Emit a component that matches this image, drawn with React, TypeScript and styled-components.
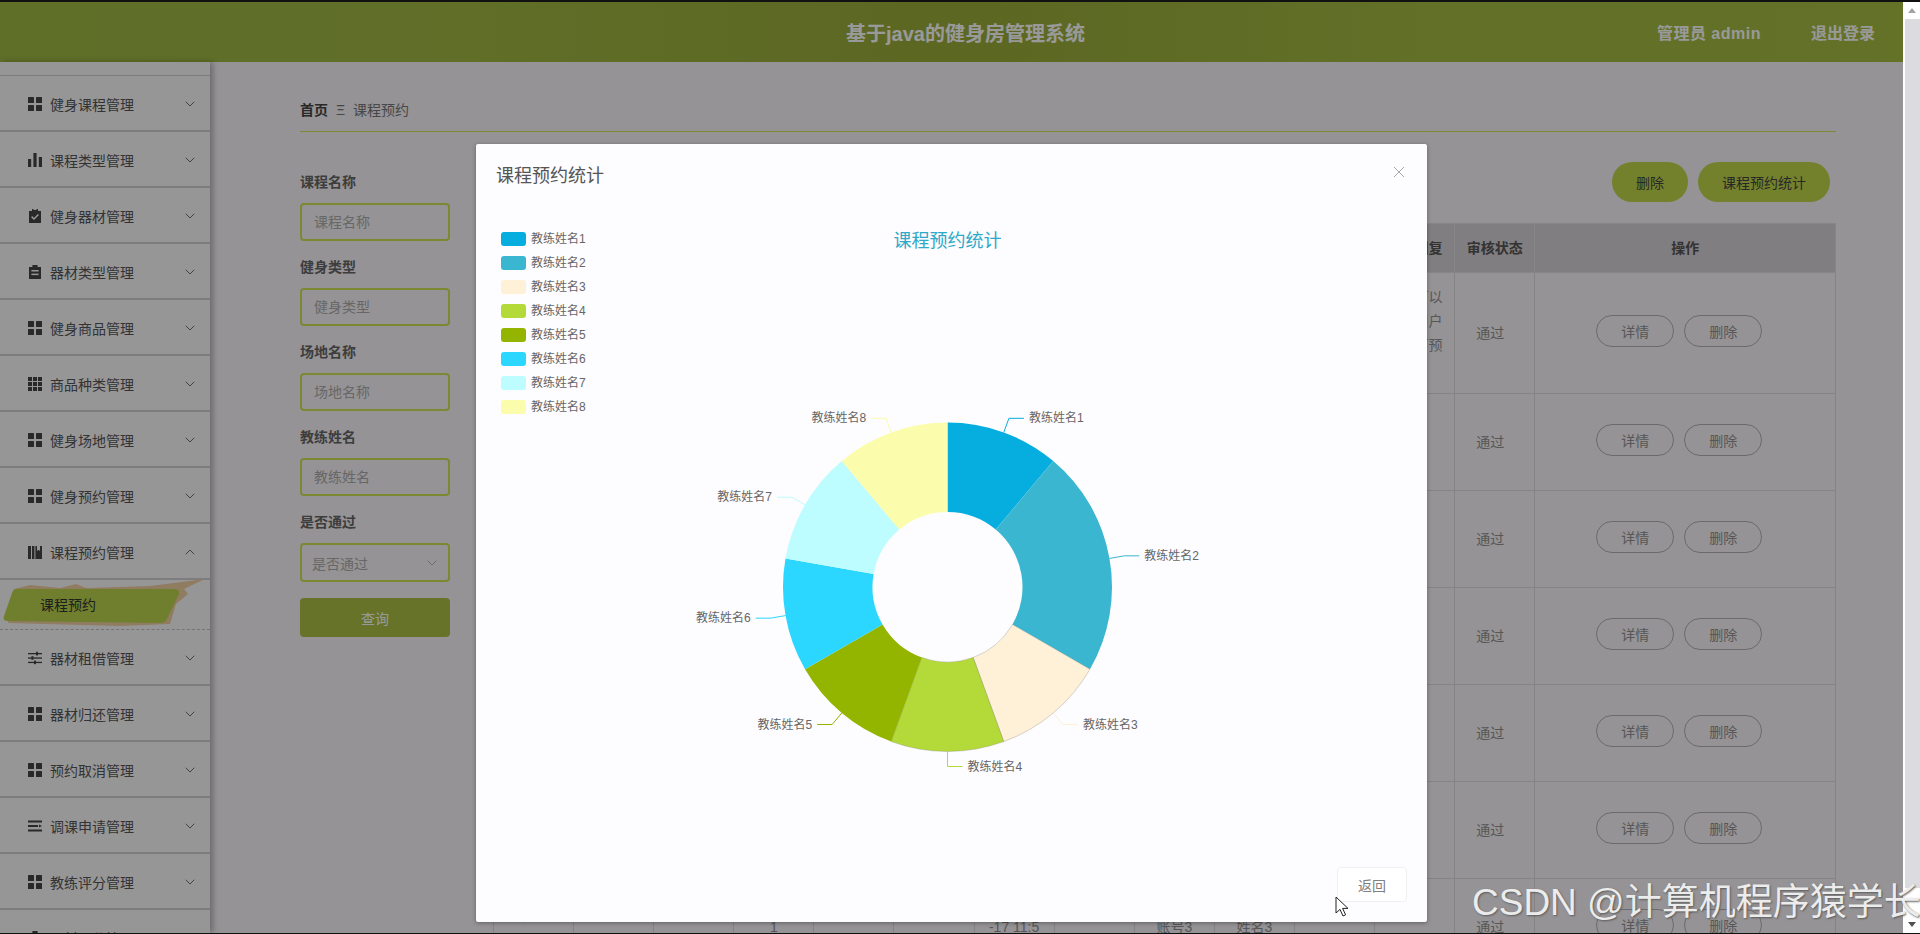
import { ReactNode } from 'react'
import styled, { createGlobalStyle } from 'styled-components'
import { LuChevronDown, LuChevronUp } from 'react-icons/lu'

const FONT = '"Liberation Sans", "Noto Sans CJK SC", sans-serif'

const GlobalStyle = createGlobalStyle`
  html, body { margin: 0; padding: 0; height: 100%; overflow: hidden; background: #000; }
  * { box-sizing: border-box; }
  body { font-family: ${FONT}; font-size: 14px; }
`

const Root = styled.div`
  position: relative;
  width: 1920px;
  height: 934px;
  padding: 2px 0 1px;
  overflow: hidden;
  display: flex;
  background: #111;
`

const Page = styled.div`
  position: relative;
  flex: 0 0 1903px;
  height: 100%;
  overflow: hidden;
  display: flex;
  flex-direction: column;
  background: #f8f5f8;
`

const Header = styled.header`
  flex: 0 0 60px;
  position: relative;
  display: flex;
  align-items: center;
  justify-content: flex-end;
  padding: 0 28px 0 0;
  gap: 50px;
  background: linear-gradient(90deg, #9eb943 0%, #a0b843 25%, #99ac39 50%, #a3bb43 75%, #a7be44 100%);
  color: #fff;
  font-size: 16px;
  font-weight: 700;
`

const HeaderTitle = styled.div`
  position: absolute;
  left: 846px;
  top: 18px;
  font-size: 20px;
  line-height: 28px;
  font-weight: 700;
  color: #fff;
`

const AdminName = styled.span`
  letter-spacing: 0.5px;
`

const Body = styled.div`
  flex: 1;
  min-height: 0;
  display: flex;
`

const Sidebar = styled.nav`
  flex: 0 0 210px;
  padding-top: 13px;
  background: #fcfafc;
  box-shadow: 3px 0 6px rgba(0, 0, 0, 0.28);
  position: relative;
  z-index: 1;
`

const NavItem = styled.div<{ $first?: boolean }>`
  height: ${(p) => (p.$first ? '57px' : '56px')};
  padding: 2px 12px 0 28px;
  display: flex;
  align-items: center;
  border-bottom: 2px solid #d3d1d3;
  border-top: ${(p) => (p.$first ? '1px solid #d3d1d3' : '0')};
  color: #555;
  font-size: 14px;

  > svg:first-child {
    flex: 0 0 14px;
    width: 14px;
    height: 14px;
    margin-right: 8px;
    color: #454545;
  }
  span { flex: 1; }
  > svg:last-child { width: 16px; height: 16px; color: #666; stroke-width: 1.4; }
`

const SubItem = styled.div`
  position: relative;
  height: 50px;
  border-bottom: 1px dashed #c4c2c4;
  display: flex;
  align-items: center;
  padding: 0 0 1px 40px;
  font-size: 14px;
  color: #333;

  span { position: relative; }
`

const Brush = styled.svg`
  position: absolute;
  left: 0;
  top: 0;
  width: 210px;
  height: 50px;
  overflow: visible;
`

const Main = styled.main`
  flex: 1;
  min-width: 0;
  padding: 0 67px 0 90px;
  overflow: hidden;
`

const Breadcrumb = styled.div`
  height: 70px;
  padding-top: 38px;
  border-bottom: 1px solid #d0e455;
  display: flex;
  gap: 8px;
  line-height: 20px;
  color: #777;
  font-size: 14px;

  b { color: #444; }
`

const Content = styled.div`
  display: flex;
  gap: 43px;
  align-items: flex-start;
`

const SearchForm = styled.form`
  flex: 0 0 150px;
  padding-top: 40px;
`

const FieldLabel = styled.div`
  font-size: 14px;
  line-height: 20px;
  font-weight: 700;
  color: #666;
  margin-bottom: 11px;
`

const FieldInput = styled.input`
  display: block;
  width: 150px;
  height: 38px;
  margin-bottom: 16px;
  padding: 0 12px;
  border: 2px solid #cde455;
  border-radius: 4px;
  background: transparent;
  font: 14px ${FONT};
  outline: none;

  &::placeholder { color: #acacac; opacity: 1; }
`

const FieldSelect = styled.div`
  width: 150px;
  height: 39px;
  margin-bottom: 16px;
  padding: 0 8px 0 10px;
  border: 2px solid #cde455;
  border-radius: 4px;
  display: flex;
  align-items: center;
  justify-content: space-between;
  color: #acacac;

  svg { width: 16px; height: 16px; stroke-width: 1.3; }
`

const QueryButton = styled.button`
  display: block;
  width: 150px;
  height: 39px;
  border: 0;
  border-radius: 4px;
  background: #aac044;
  color: #fff;
  font: 14px ${FONT};
`

const TablePanel = styled.div`
  flex: 1;
  min-width: 0;
`

const Toolbar = styled.div`
  height: 91px;
  padding: 30px 6px 0 0;
  display: flex;
  justify-content: flex-end;
  gap: 10px;
`

const PillButton = styled.button<{ $w: number }>`
  width: ${(p) => p.$w}px;
  height: 40px;
  border: 0;
  border-radius: 20px;
  background: #c0d84b;
  color: #444;
  font: 14px ${FONT};
`

const Table = styled.table`
  width: 1342px;
  table-layout: fixed;
  border-collapse: collapse;
  color: #929292;
  font-size: 14px;
  line-height: 24px;
  text-align: center;

  th {
    height: 49px;
    padding: 0 6px;
    background: #d5d2d5;
    border: 1px solid #e2e0e2;
    color: #555;
    font-weight: 700;
  }
  td {
    padding: 12px 11px;
    border: 1px solid #dedcde;
    word-break: break-all;
    white-space: pre-line;
  }
`

const StatusCell = styled.td`
  && { padding-right: 20px; }
`

const ActionRow = styled.div`
  display: flex;
  justify-content: center;
  margin-bottom: 5px;
  padding-right: 2px;
`

const OutlineButton = styled.button`
  width: 78px;
  height: 32px;
  margin-right: 10px;
  border: 1px solid #b4b2b4;
  border-radius: 16px;
  background: transparent;
  color: #929292;
  font: 14px ${FONT};
`

const Scrim = styled.div`
  position: absolute;
  inset: 0;
  z-index: 5;
  background: rgba(0, 0, 0, 0.4);
`

const Modal = styled.section`
  position: absolute;
  z-index: 6;
  left: 476px;
  top: 142px;
  width: 951px;
  height: 778px;
  display: flex;
  flex-direction: column;
  background: #fdfcfe;
  border-radius: 2px;
  box-shadow: 0 1px 4px rgba(0, 0, 0, 0.35);
`

const ModalHeader = styled.div`
  flex: 0 0 64px;
  padding: 20px;
  display: flex;
  justify-content: space-between;
`

const ModalTitle = styled.h2`
  margin: 0;
  font-size: 18px;
  line-height: 24px;
  font-weight: 400;
  color: #555;
`

const CloseIcon = styled.svg`
  width: 10px;
  height: 10px;
  margin: 3px 3px 0 0;
`

const ChartSvg = styled.svg`
  display: block;
  flex: 1;
  min-height: 0;
  width: 911px;
  margin: 0 20px;
`

const ChartTitle = styled.text`
  font-size: 18px;
  fill: #2ea9c9;
  text-anchor: middle;
  dominant-baseline: central;
`

const ChartLabel = styled.text`
  font-size: 12px;
  fill: #666;
  dominant-baseline: central;
`

const ModalFooter = styled.div`
  flex: 0 0 55px;
  padding: 0 20px 20px;
  display: flex;
  justify-content: flex-end;
`

const BackButton = styled.button`
  width: 70px;
  height: 35px;
  border: 1px solid #f1eff3;
  border-radius: 4px;
  background: #fff;
  color: #808080;
  font: 14px ${FONT};
`

const Scrollbar = styled.aside`
  flex: 0 0 17px;
  display: flex;
  flex-direction: column;
  background: #fff;
`

const ScrollArrow = styled.div<{ $down?: boolean }>`
  flex: 0 0 17px;
  display: flex;
  align-items: center;
  justify-content: center;

  &::after {
    content: '';
    border-left: 4px solid transparent;
    border-right: 4px solid transparent;
    ${(p) => (p.$down ? 'border-top: 5px solid #505050;' : 'border-bottom: 5px solid #a3a3a3;')}
  }
`

const ScrollThumb = styled.div`
  flex: 1;
  margin: 0 0 28px 2px;
  background: #dcdbdf;
`

const Watermark = styled.div`
  position: absolute;
  z-index: 8;
  left: 1472px;
  top: 880px;
  font-size: 37px;
  line-height: 46px;
  white-space: nowrap;
  color: #ececec;
  text-shadow: 1px 1px 2px #5c5c5c;
`

const Cursor = styled.svg`
  position: absolute;
  z-index: 9;
  left: 1335px;
  top: 896px;
  width: 13px;
  height: 21px;
`

const Glyph = ({ children }: { children: ReactNode }) => (
  <svg viewBox="0 0 14 14" fill="currentColor">
    {children}
  </svg>
)

const GridIcon = () => (
  <Glyph>
    <rect x="0" y="0" width="6" height="6" rx="0.6" />
    <rect x="8" y="0" width="6" height="6" rx="0.6" />
    <rect x="0" y="8" width="6" height="6" rx="0.6" />
    <rect x="8" y="8" width="6" height="6" rx="0.6" />
  </Glyph>
)

const Grid3Icon = () => (
  <Glyph>
    {[0, 5, 10].flatMap((y) =>
      [0, 5, 10].map((x) => <rect key={`${x}-${y}`} x={x} y={y} width="4" height="4" />),
    )}
  </Glyph>
)

const BarsIcon = () => (
  <Glyph>
    <rect x="0" y="6" width="3.2" height="8" />
    <rect x="5.4" y="0" width="3.2" height="14" />
    <rect x="10.8" y="4" width="3.2" height="10" />
  </Glyph>
)

const ClipCheckIcon = () => (
  <Glyph>
    <path d="M1 2h3V0h1.5v1h3V0H10v2h3v12H1z" />
    <path d="M3.6 7.6 6 10l4.4-4.6" fill="none" stroke="#fcfafc" strokeWidth="1.5" />
  </Glyph>
)

const ClipListIcon = () => (
  <Glyph>
    <path d="M1 2h3.4V0h5.2v2H13v12H1z" />
    <rect x="3.4" y="5" width="7.2" height="1.5" fill="#fcfafc" />
    <rect x="3.4" y="8.6" width="7.2" height="1.5" fill="#fcfafc" />
  </Glyph>
)

const BookIcon = () => (
  <Glyph>
    <rect x="0" y="1" width="3" height="13" />
    <rect x="4" y="1" width="2.4" height="13" />
    <path d="M7.4 1h1.6v5l1.5-1.2L12 6V1h2v13H7.4z" />
  </Glyph>
)

const SliderIcon = () => (
  <Glyph>
    <rect x="0" y="2" width="14" height="1.3" />
    <rect x="0" y="6.4" width="14" height="1.3" />
    <rect x="0" y="10.8" width="14" height="1.3" />
    <rect x="8" y="0.8" width="2" height="3.6" />
    <rect x="3.4" y="5.2" width="2" height="3.6" />
    <rect x="6" y="9.6" width="2" height="3.6" />
  </Glyph>
)

const StreamIcon = () => (
  <Glyph>
    <rect x="0" y="1.5" width="14" height="2" />
    <rect x="0" y="6" width="10" height="2" />
    <path d="M11 5.4 14 7l-3 1.6z" />
    <rect x="0" y="10.5" width="14" height="2" />
  </Glyph>
)

interface MenuEntry {
  label: string
  icon: ReactNode
}

const grid = <GridIcon />

const menuTop: MenuEntry[] = [
  { label: '健身课程管理', icon: grid },
  { label: '课程类型管理', icon: <BarsIcon /> },
  { label: '健身器材管理', icon: <ClipCheckIcon /> },
  { label: '器材类型管理', icon: <ClipListIcon /> },
  { label: '健身商品管理', icon: grid },
  { label: '商品种类管理', icon: <Grid3Icon /> },
  { label: '健身场地管理', icon: grid },
  { label: '健身预约管理', icon: grid },
]

const menuBottom: MenuEntry[] = [
  { label: '器材租借管理', icon: <SliderIcon /> },
  { label: '器材归还管理', icon: grid },
  { label: '预约取消管理', icon: grid },
  { label: '调课申请管理', icon: <StreamIcon /> },
  { label: '教练评分管理', icon: grid },
  { label: '器材评分管理', icon: <ClipListIcon /> },
]

const columns = [
  '课程名称', '健身类型', '场地名称', '预约人数', '教练账号', '教练姓名', '预约时间',
  '备注信息', '用户账号', '用户姓名', '联系电话', '审核回复', '审核状态', '操作',
]

const rows = [9, 8, 7, 6, 5, 4, 3].map((n) => ({
  cells: [
    `课程名称${n}`, `健身类型${n}`, `场地名称${n}`, '1', `教练账号${n}`, `教练姓名${n}`,
    '2021-03\n-17 11:5\n8:00', `备注信息${n}`, `账号${n}`, `姓名${n}`, `联系电话${n}`,
  ],
  reply: n === 9 ? '审核可以通过用户课程可预约了' : '',
}))

const slices = [
  { name: '教练姓名1', value: 1, color: '#06aee0' },
  { name: '教练姓名2', value: 2, color: '#3ab6d0' },
  { name: '教练姓名3', value: 1, color: '#fff0d8', edge: true },
  { name: '教练姓名4', value: 1, color: '#b4da3a', edge: true },
  { name: '教练姓名5', value: 1, color: '#94b500' },
  { name: '教练姓名6', value: 1, color: '#2bd6ff' },
  { name: '教练姓名7', value: 1, color: '#bdfcff' },
  { name: '教练姓名8', value: 1, color: '#fbfdac' },
]

const CX = 947.5
const CY = 587
const R = 164.5
const R_INNER = 75

const polar = (radius: number, deg: number) => {
  const a = (deg * Math.PI) / 180
  return [CX + radius * Math.sin(a), CY - radius * Math.cos(a)]
}

const arcPath = (from: number, to: number) => {
  const [x1, y1] = polar(R, from)
  const [x2, y2] = polar(R, to)
  const [x3, y3] = polar(R_INNER, to)
  const [x4, y4] = polar(R_INNER, from)
  const large = to - from > 180 ? 1 : 0
  return `M${x1} ${y1}A${R} ${R} 0 ${large} 1 ${x2} ${y2}L${x3} ${y3}A${R_INNER} ${R_INNER} 0 ${large} 0 ${x4} ${y4}Z`
}

const DonutChart = () => {
  const total = slices.reduce((sum, s) => sum + s.value, 0)
  let start = 0
  return (
    <ChartSvg viewBox="496 208 911 659">
      <ChartTitle x={CX} y={241}>课程预约统计</ChartTitle>
      {slices.map((s, i) => (
        <g key={s.name}>
          <rect x={501} y={232 + i * 24} width={25} height={14} rx={3} fill={s.color} />
          <ChartLabel x={531} y={239 + i * 24}>{s.name}</ChartLabel>
        </g>
      ))}
      {slices.map((s) => {
        const from = start
        const to = start + (s.value / total) * 360
        start = to
        const mid = (from + to) / 2
        const [ax, ay] = polar(R, mid)
        const [bx, by] = polar(R + 15, mid)
        const right = mid <= 180
        const ex = right ? bx + 15 : bx - 15
        return (
          <g key={s.name}>
            <path
              d={arcPath(from, to)}
              fill={s.color}
              stroke={s.edge ? 'rgba(90, 90, 70, 0.35)' : 'none'}
              strokeWidth="0.7"
            />
            <polyline points={`${ax},${ay} ${bx},${by} ${ex},${by}`} fill="none" stroke={s.color} />
            <ChartLabel x={right ? ex + 5 : ex - 5} y={by} textAnchor={right ? 'start' : 'end'}>
              {s.name}
            </ChartLabel>
          </g>
        )
      })}
    </ChartSvg>
  )
}

const MenuRow = ({ entry, first, open }: { entry: MenuEntry; first?: boolean; open?: boolean }) => (
  <NavItem $first={first}>
    {entry.icon}
    <span>{entry.label}</span>
    {open ? <LuChevronUp /> : <LuChevronDown />}
  </NavItem>
)

export default function App() {
  return (
    <>
      <GlobalStyle />
      <Root>
        <Page>
          <Header>
            <HeaderTitle>基于java的健身房管理系统</HeaderTitle>
            <AdminName>管理员 admin</AdminName>
            <span>退出登录</span>
          </Header>
          <Body>
            <Sidebar>
              {menuTop.map((entry, i) => (
                <MenuRow key={entry.label} entry={entry} first={i === 0} />
              ))}
              <MenuRow entry={{ label: '课程预约管理', icon: <BookIcon /> }} open />
              <SubItem>
                <Brush viewBox="0 0 210 50">
                  <path
                    d="M14 9 30 5l30 3 16-4 10 4 64-2 55-7-21 10 4 5-12 10-6 20-50 2L8 43z"
                    fill="#f0cfa2"
                  />
                  <path
                    d="M17 9H174q6 0 5 5L167 39q-2 4-7 4L8 41q-6 0-4-5L12 13q1-4 5-4z"
                    fill="#bad44e"
                  />
                </Brush>
                <span>课程预约</span>
              </SubItem>
              {menuBottom.map((entry) => (
                <MenuRow key={entry.label} entry={entry} />
              ))}
            </Sidebar>
            <Main>
              <Breadcrumb>
                <b>首页</b>
                <span>Ξ</span>
                <span>课程预约</span>
              </Breadcrumb>
              <Content>
                <SearchForm>
                  <FieldLabel>课程名称</FieldLabel>
                  <FieldInput placeholder="课程名称" />
                  <FieldLabel>健身类型</FieldLabel>
                  <FieldInput placeholder="健身类型" />
                  <FieldLabel>场地名称</FieldLabel>
                  <FieldInput placeholder="场地名称" />
                  <FieldLabel>教练姓名</FieldLabel>
                  <FieldInput placeholder="教练姓名" />
                  <FieldLabel>是否通过</FieldLabel>
                  <FieldSelect>
                    是否通过
                    <LuChevronDown />
                  </FieldSelect>
                  <QueryButton type="button">查询</QueryButton>
                </SearchForm>
                <TablePanel>
                  <Toolbar>
                    <PillButton $w={76}>删除</PillButton>
                    <PillButton $w={132}>课程预约统计</PillButton>
                  </Toolbar>
                  <Table>
                    <colgroup>
                      {columns.map((c) => (
                        <col key={c} width={c === '操作' ? 301 : 80.1} />
                      ))}
                    </colgroup>
                    <thead>
                      <tr>
                        {columns.map((c) => (
                          <th key={c}>{c}</th>
                        ))}
                      </tr>
                    </thead>
                    <tbody>
                      {rows.map((row, i) => (
                        <tr key={i}>
                          {row.cells.map((cell, j) => (
                            <td key={j}>{cell}</td>
                          ))}
                          <td>{row.reply}</td>
                          <StatusCell>通过</StatusCell>
                          <td>
                            <ActionRow>
                              <OutlineButton>详情</OutlineButton>
                              <OutlineButton>删除</OutlineButton>
                            </ActionRow>
                          </td>
                        </tr>
                      ))}
                    </tbody>
                  </Table>
                </TablePanel>
              </Content>
            </Main>
          </Body>
          <Scrim />
          <Modal>
            <ModalHeader>
              <ModalTitle>课程预约统计</ModalTitle>
              <CloseIcon viewBox="0 0 10 10">
                <path d="M0 0 10 10M10 0 0 10" stroke="#a8a8a8" strokeWidth="1" />
              </CloseIcon>
            </ModalHeader>
            <DonutChart />
            <ModalFooter>
              <BackButton>返回</BackButton>
            </ModalFooter>
          </Modal>
        </Page>
        <Scrollbar>
          <ScrollArrow />
          <ScrollThumb />
          <ScrollArrow $down />
        </Scrollbar>
        <Watermark>CSDN @计算机程序猿学长</Watermark>
        <Cursor viewBox="0 0 13 21">
          <path d="M1 1v16l4-3.6 3 6.6 2.6-1.2-3-6.4H13z" fill="#fff" stroke="#222" strokeWidth="1" />
        </Cursor>
      </Root>
    </>
  )
}
